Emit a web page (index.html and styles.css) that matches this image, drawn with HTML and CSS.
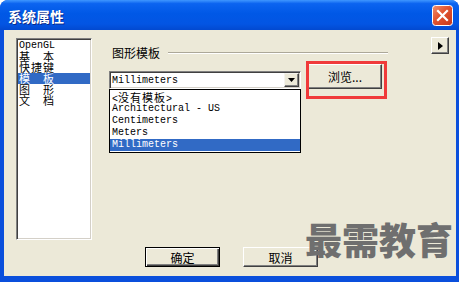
FILE: index.html
```html
<!DOCTYPE html>
<html lang="zh">

<head>
    <meta charset="UTF-8">
    <meta name="viewport" content="width=device-width, initial-scale=1.0">
    <title>系统属性</title>

    <link rel="stylesheet" href="styles.css">
</head>

<body>

    <div class="window">
        <div class="titlebar">
            <span class="title">系统属性</span>
            <span class="close">
                <svg width="21" height="21" viewBox="0 0 21 21">
                    <defs>
                        <linearGradient id="red" x1="0" y1="0" x2="1" y2="1">
                            <stop offset="0" stop-color="#f0926f" />
                            <stop offset="0.45" stop-color="#e2532f" />
                            <stop offset="1" stop-color="#c4361a" />
                        </linearGradient>
                    </defs>
                    <rect x="0.5" y="0.5" width="20" height="20" rx="3" fill="url(#red)" stroke="#fff" />
                    <path d="M6 6 L15 15 M15 6 L6 15" stroke="#fff" stroke-width="2.2" stroke-linecap="square" />
                </svg>
            </span>
        </div>

        <div class="client">
            <div class="top">
                <ul class="nav">
                    <li class="en">OpenGL</li>
                    <li class="wide">基本</li>
                    <li>快捷键</li>
                    <li class="wide on">模板</li>
                    <li class="wide">图形</li>
                    <li class="wide">文档</li>
                </ul>

                <div class="group">
                    <div class="legend">
                        <span>图形模板</span>
                        <i class="rule"></i>
                    </div>

                    <div class="pick">
                        <div class="combo-wrap">
                            <div class="combo">
                                <span>Millimeters</span>
                                <b class="drop">
                                    <svg width="7" height="4" viewBox="0 0 7 4"><path d="M0 0 H7 L3.5 4 Z" fill="#000" /></svg>
                                </b>
                            </div>
                            <ul class="options">
                                <li>&lt;<span class="zh">没有模板</span>&gt;</li>
                                <li>Architectural - US</li>
                                <li>Centimeters</li>
                                <li>Meters</li>
                                <li class="on">Millimeters</li>
                            </ul>
                        </div>

                        <div class="browse-wrap">
                            <button class="btn browse">浏览...</button>
                            <span class="mark"></span>
                        </div>
                    </div>
                </div>

                <button class="btn more">
                    <svg width="5" height="8" viewBox="0 0 5 8"><path d="M0 0 L5 4 L0 8 Z" fill="#000" /></svg>
                </button>
            </div>

            <div class="actions">
                <button class="btn default">确定</button>
                <button class="btn">取消</button>
            </div>

            <div class="watermark">最需教育</div>
        </div>
    </div>

</body>

</html>
```

FILE: styles.css
```css
* {
    box-sizing: border-box;
}

body {
    margin: 0;
    font-family: "Noto Sans CJK SC", sans-serif;
    font-size: 12px;
    color: #000;
}

.window {
    width: 459px;
    height: 282px;
    display: flex;
    flex-direction: column;
    background: #0a4fdc;
    border-radius: 8px 8px 0 0;
    overflow: hidden;
}

.titlebar {
    height: 30px;
    display: flex;
    align-items: center;
    justify-content: space-between;
    padding: 1px 6px 0 8px;
    background: linear-gradient(#3f97ff 0%, #0c64f0 12%, #0058e6 45%, #0355e3 80%, #0249d0 100%);
}

.title {
    color: #fff;
    font-weight: 700;
    font-size: 14px;
    text-shadow: 1px 1px #0b2a8a;
}

.close {
    display: flex;
}

.client {
    flex: 1;
    position: relative;
    display: flex;
    flex-direction: column;
    margin: 0 3px 6px 4px;
    padding: 8px 0 0 12px;
    background: #ece9d8;
}

.top {
    display: flex;
    align-items: flex-start;
    height: 202px;
}

/* left list */
.nav {
    list-style: none;
    margin: 0;
    padding: 1px 1px 0;
    width: 76px;
    height: 202px;
    background: #fff;
    border: 1px solid;
    border-color: #808080 #fff #fff #808080;
    box-shadow: inset 1px 1px #404040, inset -1px -1px #d4d0c8;
}

.nav li {
    height: 11px;
    line-height: 11px;
    padding-left: 1px;
    font-size: 11px;
    letter-spacing: 1px;
    white-space: nowrap;
}

.nav li.en {
    font-family: "Liberation Mono", monospace;
    font-size: 10px;
    letter-spacing: 0;
}

.nav li.wide {
    letter-spacing: 13px;
}

.nav li.on {
    background: #316ac5;
    color: #fff;
}

/* template group */
.group {
    width: 279px;
    margin-left: 17px;
}

.legend {
    display: flex;
    align-items: center;
    height: 14px;
    margin-top: 8px;
    padding-left: 3px;
}

.legend span {
    line-height: 14px;
}

.rule {
    flex: 1;
    height: 2px;
    margin-left: 8px;
    border-top: 1px solid #aca899;
    border-bottom: 1px solid #fff;
}

.pick {
    display: flex;
    align-items: flex-start;
    margin-top: 4px;
}

.combo-wrap {
    width: 192px;
    margin-top: 7px;
}

.combo {
    height: 18px;
    display: flex;
    align-items: center;
    justify-content: space-between;
    padding: 0 1px 0 2px;
    background: #fff;
    border: 1px solid;
    border-color: #808080 #fff #fff #808080;
    box-shadow: inset 1px 1px #404040, inset -1px -1px #d4d0c8;
    font-family: "Liberation Mono", monospace;
    font-size: 10px;
}

.drop {
    width: 15px;
    height: 14px;
    display: flex;
    align-items: center;
    justify-content: center;
    background: #ece9d8;
    border: 1px solid;
    border-color: #f4f3ee #404040 #404040 #f4f3ee;
    box-shadow: inset -1px -1px #808080;
}

.options {
    list-style: none;
    margin: 0;
    padding: 1px 0 0;
    height: 64px;
    background: #fff;
    border: 1px solid #000;
    font-family: "Liberation Mono", monospace;
    font-size: 10px;
}

.options li {
    height: 12px;
    line-height: 12px;
    padding-left: 2px;
    white-space: pre;
}

.options .zh {
    font-family: "Noto Sans CJK SC", sans-serif;
    font-size: 11px;
    letter-spacing: 1px;
}

.options li.on {
    background: #316ac5;
    color: #fff;
}

.browse-wrap {
    position: relative;
    margin-left: 7px;
}

.mark {
    position: absolute;
    left: -2px;
    top: -3px;
    width: 81px;
    height: 38px;
    border: 3px solid #f03a3a;
}

/* buttons */
.btn {
    width: 75px;
    height: 20px;
    padding: 0;
    font-family: "Noto Sans CJK SC", sans-serif;
    font-size: 12px;
    color: #000;
    background: #ece9d8;
    border: 1px solid;
    border-color: #fff #404040 #404040 #fff;
    box-shadow: inset -1px -1px #808080;
}

.browse {
    width: 74px;
    height: 25px;
}

.default {
    border: 1px solid #000;
    box-shadow: inset 1px 1px #fff, inset -1px -1px #404040, inset -2px -2px #808080;
}

.more {
    width: 18px;
    height: 17px;
    margin: -1px 0 0 43px;
    display: flex;
    align-items: center;
    justify-content: center;
}

.actions {
    display: flex;
    gap: 23px;
    margin: 7px 0 0 129px;
}

.watermark {
    position: absolute;
    left: 301px;
    top: 191px;
    font-size: 37px;
    font-weight: 900;
    line-height: 1;
    color: #6f6f6f;
}
```
